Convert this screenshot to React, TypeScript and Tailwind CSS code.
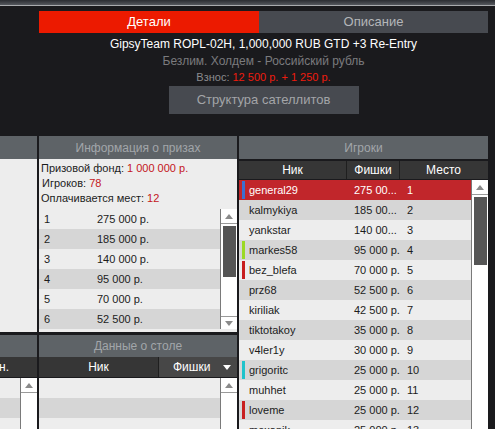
import React from 'react';

type Player = { nick: string; chips: string; place: string; mark?: string };

const players: Player[] = [
  { nick: 'general29', chips: '275 00...', place: '1', mark: 'bg-[#3d6fd1]' },
  { nick: 'kalmykiya', chips: '185 00...', place: '2' },
  { nick: 'yankstar', chips: '140 00...', place: '3' },
  { nick: 'markes58', chips: '95 000 р.', place: '4', mark: 'bg-[#9bd924]' },
  { nick: 'bez_blefa', chips: '70 000 р.', place: '5', mark: 'bg-[#c81e1e]' },
  { nick: 'prz68', chips: '52 500 р.', place: '6' },
  { nick: 'kiriliak', chips: '42 500 р.', place: '7' },
  { nick: 'tiktotakoy', chips: '35 000 р.', place: '8' },
  { nick: 'v4ler1y', chips: '30 000 р.', place: '9' },
  { nick: 'grigoritc', chips: '25 000 р.', place: '10', mark: 'bg-[#1fc3cb]' },
  { nick: 'muhhet', chips: '25 000 р.', place: '11' },
  { nick: 'loveme', chips: '25 000 р.', place: '12', mark: 'bg-[#c81e1e]' },
  { nick: 'mexanik', chips: '25 000 р.', place: '13' },
];

const prizes = [
  ['1', '275 000 р.'],
  ['2', '185 000 р.'],
  ['3', '140 000 р.'],
  ['4', '95 000 р.'],
  ['5', '70 000 р.'],
  ['6', '52 500 р.'],
];

function Arrow({ down = false }: { down?: boolean }) {
  return (
    <svg width="8" height="5" viewBox="0 0 8 5" className="block">
      <path d={down ? 'M0 0h8L4 5z' : 'M0 5h8L4 0z'} fill="#8a8a8a" />
    </svg>
  );
}

function Scrollbar({ thumb, down = false }: { thumb?: string; down?: boolean }) {
  return (
    <div className="w-[17px] shrink-0 border-l border-[#7a7a7a] bg-white flex flex-col">
      <div className="h-[15px] flex items-center justify-center border-b border-[#9a9a9a]">
        <Arrow />
      </div>
      {thumb && <div className={`ml-[2px] mt-[2px] w-[13px] bg-[#555555] ${thumb}`} />}
      <div className="flex-1" />
      {down && (
        <div className="h-[13px] flex items-center justify-center border-t border-[#9a9a9a]">
          <Arrow down />
        </div>
      )}
    </div>
  );
}

function PanelHeader({ title, h }: { title?: string; h: string }) {
  return (
    <div className={`${h} shrink-0 bg-[#5e6367] flex items-center justify-center text-[12px] text-[#a2a6aa]`}>
      {title}
    </div>
  );
}

function EmptyRows({ n }: { n: number }) {
  return (
    <div className="flex-1">
      {Array.from({ length: n }).map((_, i) => (
        <div key={i} className={`h-[20px] ${i % 2 ? 'bg-[#d6d6d6]' : 'bg-[#ededed]'}`} />
      ))}
    </div>
  );
}

export default function App() {
  return (
    <div className="w-[495px] h-[429px] overflow-hidden bg-[#1a1a1d] font-['Liberation_Sans',Arial,sans-serif] flex flex-col">
      <div className="h-[5px] shrink-0 bg-gradient-to-b from-[#2b2d32] to-[#55585e]" />
      <div className="h-px shrink-0 bg-[#a9abae]" />

      <div className="ml-[39px] w-[449px] mt-[5px] flex flex-col items-center shrink-0">
        <div className="w-full h-[22px] flex text-[13px]">
          <div className="w-[220px] bg-[#ec1a00] text-white flex items-center justify-center">Детали</div>
          <div className="flex-1 bg-[#474a50] text-[#b4b6b9] flex items-center justify-center">Описание</div>
        </div>
        <div className="mt-[2px] h-[18px] leading-[18px] text-[12px] text-white">
          GipsyTeam ROPL-02H, 1,000,000 RUB GTD +3 Re-Entry
        </div>
        <div className="h-[16px] leading-[16px] text-[12px] text-[#7b7b7e]">Безлим. Холдем - Российский рубль</div>
        <div className="h-[16px] leading-[16px] text-[11px] text-[#8a8a8d]">
          Взнос: <span className="text-[#ee1c0e]">12 500 р. + 1 250 р.</span>
        </div>
        <div className="mt-px w-[190px] h-[28px] bg-[#474a50] text-[13px] text-[#a3a5a8] flex items-center justify-center">
          Структура сателлитов
        </div>
      </div>

      <div className="mt-[22px] flex-1 flex gap-[2px] min-h-0">
        {/* left clipped column */}
        <div className="w-[37px] shrink-0 flex flex-col gap-[3px]">
          <div className="h-[196px] shrink-0 flex flex-col">
            <PanelHeader h="h-[23px]" />
            <div className="flex-1 bg-[#ededed]" />
          </div>
          <div className="flex-1 flex flex-col min-h-0">
            <PanelHeader h="h-[22px]" />
            <div className="h-[20px] shrink-0 bg-[#363636] text-white text-[12px] flex items-center -ml-px">н.</div>
            <div className="h-px shrink-0" />
            <div className="flex-1 flex min-h-0 overflow-hidden">
              <EmptyRows n={3} />
              <Scrollbar />
            </div>
          </div>
        </div>

        {/* prize info + table */}
        <div className="w-[198px] shrink-0 flex flex-col gap-[3px]">
          <div className="h-[196px] shrink-0 flex flex-col">
            <PanelHeader title="Информация о призах" h="h-[23px]" />
            <div className="flex-1 bg-[#ededed] flex flex-col text-[11px] text-[#1c1c1c]">
              <div className="pt-[2px] pl-[2px] leading-[15px]">
                <div>
                  Призовой фонд: <span className="text-[#c4161c]">1 000 000 р.</span>
                </div>
                <div className="pl-[1px]">
                  Игроков: <span className="text-[#c4161c]">78</span>
                </div>
                <div>
                  Оплачивается мест: <span className="text-[#c4161c]">12</span>
                </div>
              </div>
              <div className="mt-[3px] h-[120px] flex">
                <div className="flex-1">
                  {prizes.map(([n, v], i) => (
                    <div
                      key={n}
                      className={`h-[20px] flex items-center pl-[5px] ${i % 2 ? 'bg-[#d6d6d6]' : 'bg-[#ededed]'}`}
                    >
                      <span className="w-[53px]">{n}</span>
                      <span>{v}</span>
                    </div>
                  ))}
                </div>
                <Scrollbar thumb="h-[51px]" down />
              </div>
            </div>
          </div>
          <div className="flex-1 flex flex-col min-h-0">
            <PanelHeader title="Данные о столе" h="h-[22px]" />
            <div className="h-[20px] shrink-0 bg-[#363636] text-white text-[12px] flex">
              <div className="w-[120px] flex items-center justify-center border-r border-[#1f1f1f]">Ник</div>
              <div className="flex-1 bg-[#474747] flex items-center pl-[14px]">
                <span className="flex-1">Фишки</span>
                <svg width="8" height="5" viewBox="0 0 8 5" className="mr-[6px]">
                  <path d="M0 0h8L4 5z" fill="#ffffff" />
                </svg>
              </div>
            </div>
            <div className="h-px shrink-0" />
            <div className="flex-1 flex min-h-0 overflow-hidden">
              <EmptyRows n={3} />
              <Scrollbar />
            </div>
          </div>
        </div>

        {/* players */}
        <div className="w-[249px] shrink-0 flex flex-col min-h-0">
          <PanelHeader title="Игроки" h="h-[23px]" />
          <div className="h-[2px] shrink-0" />
          <div className="h-[18px] shrink-0 bg-[#363636] text-white text-[12px] flex">
            <div className="w-[108px] flex items-center justify-center border-r border-[#1f1f1f]">Ник</div>
            <div className="w-[53px] flex items-center justify-center border-r border-[#1f1f1f]">Фишки</div>
            <div className="w-[87px] flex items-center justify-center">Место</div>
          </div>
          <div className="h-px shrink-0" />
          <div className="flex-1 flex min-h-0 overflow-hidden">
            <div className="w-[232px] shrink-0">
              {players.map((p, i) => {
                const sel = i === 0;
                const bg = sel ? 'bg-[#c1262b] text-white' : i % 2 ? 'bg-[#d6d6d6] text-[#1c1c1c]' : 'bg-[#ededed] text-[#1c1c1c]';
                return (
                  <div key={p.nick} className={`h-[20px] flex items-center text-[11px] ${bg}`}>
                    <div className={`ml-[3px] w-[3px] h-[18px] ${p.mark ?? ''}`} />
                    <span className="ml-[4px] w-[105px] whitespace-nowrap">{p.nick}</span>
                    <span className="w-[53px] whitespace-nowrap">{p.chips}</span>
                    <span>{p.place}</span>
                  </div>
                );
              })}
            </div>
            <Scrollbar thumb="h-[68px]" />
          </div>
        </div>
      </div>
    </div>
  );
}
